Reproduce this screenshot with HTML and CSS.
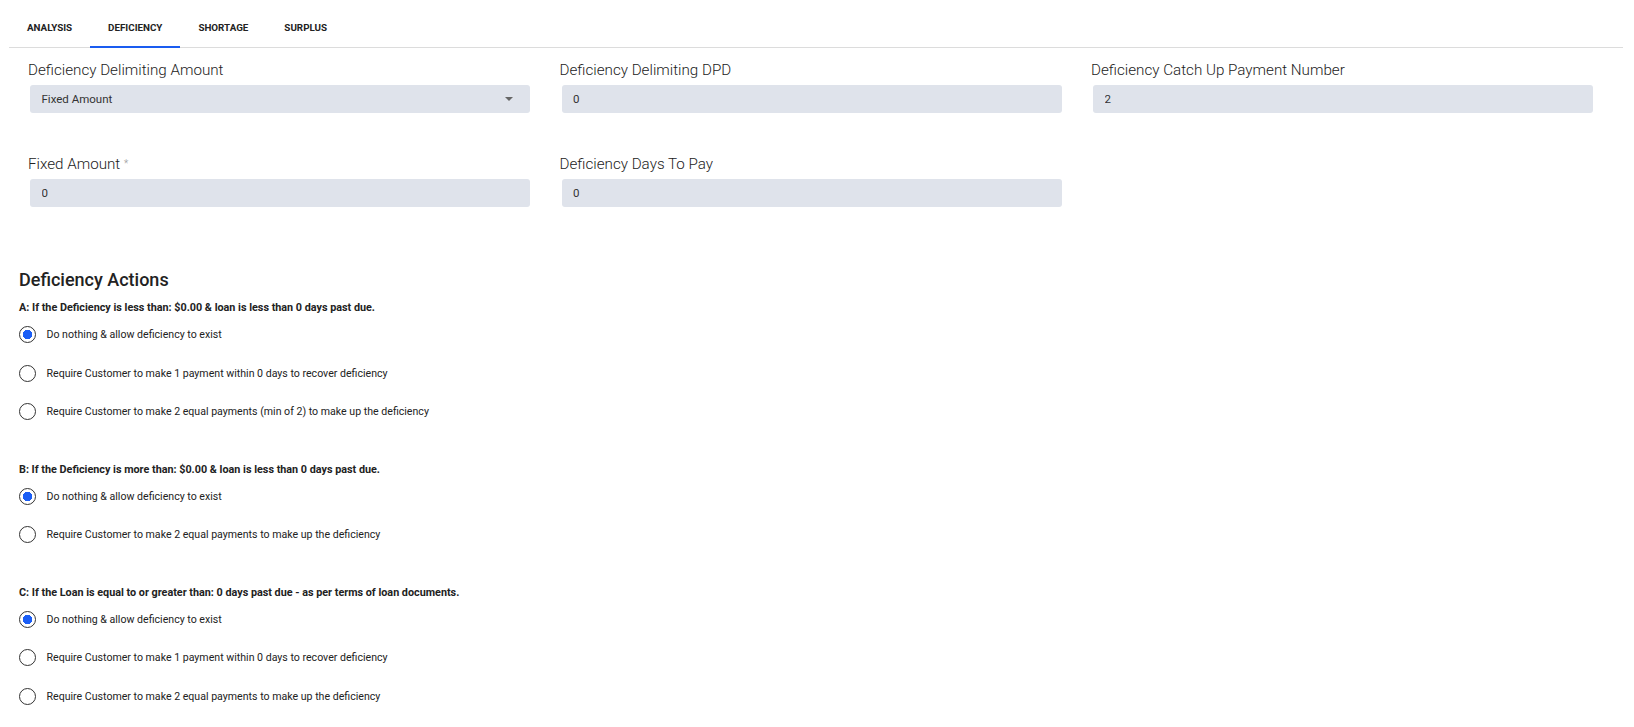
FILE: index.html
```html
<!DOCTYPE html>
<html lang="en">
<head>
    <meta charset="UTF-8">
    <title>Deficiency</title>
    <link rel="stylesheet" href="styles.css">
</head>
<body>
    <!-- Tabs -->
    <div class="tabs">
        <a class="tab">Analysis</a>
        <a class="tab active">Deficiency</a>
        <a class="tab">Shortage</a>
        <a class="tab">Surplus</a>
    </div>

    <!-- Settings fields -->
    <div class="fields">
        <div class="field">
            <label class="field-label">Deficiency Delimiting Amount</label>
            <div class="field-input select">
                <span>Fixed Amount</span>
                <svg class="caret" width="8" height="4" viewBox="0 0 8 4"><path d="M0 0 L8 0 L4 4 Z" fill="#666"/></svg>
            </div>
        </div>
        <div class="field">
            <label class="field-label">Deficiency Delimiting DPD</label>
            <input class="field-input" type="text" value="0">
        </div>
        <div class="field">
            <label class="field-label">Deficiency Catch Up Payment Number</label>
            <input class="field-input" type="text" value="2">
        </div>
        <div class="field">
            <label class="field-label">Fixed Amount <span class="req">*</span></label>
            <input class="field-input" type="text" value="0">
        </div>
        <div class="field">
            <label class="field-label">Deficiency Days To Pay</label>
            <input class="field-input" type="text" value="0">
        </div>
    </div>

    <!-- Actions -->
    <div class="actions">
        <h2>Deficiency Actions</h2>

        <div class="action-group">
            <p class="action-title">A: If the Deficiency is less than: $0.00 &amp; loan is less than 0 days past due.</p>
            <label class="option"><input type="radio" name="a" checked> Do nothing &amp; allow deficiency to exist</label>
            <label class="option"><input type="radio" name="a"> Require Customer to make 1 payment within 0 days to recover deficiency</label>
            <label class="option"><input type="radio" name="a"> Require Customer to make 2 equal payments (min of 2) to make up the deficiency</label>
        </div>

        <div class="action-group">
            <p class="action-title">B: If the Deficiency is more than: $0.00 &amp; loan is less than 0 days past due.</p>
            <label class="option"><input type="radio" name="b" checked> Do nothing &amp; allow deficiency to exist</label>
            <label class="option"><input type="radio" name="b"> Require Customer to make 2 equal payments to make up the deficiency</label>
        </div>

        <div class="action-group">
            <p class="action-title">C: If the Loan is equal to or greater than: 0 days past due - as per terms of loan documents.</p>
            <label class="option"><input type="radio" name="c" checked> Do nothing &amp; allow deficiency to exist</label>
            <label class="option"><input type="radio" name="c"> Require Customer to make 1 payment within 0 days to recover deficiency</label>
            <label class="option"><input type="radio" name="c"> Require Customer to make 2 equal payments to make up the deficiency</label>
        </div>
    </div>
</body>
</html>
```

FILE: styles.css
```css
/* Styles */
body {
    font-family: Roboto, "Liberation Sans", sans-serif;
    color: #222;
    background-color: #fff;
    margin: 0;
    padding: 0;
}

.tabs {
    display: flex;
    margin: 0 11px 0 9px;
    border-bottom: 1px solid #dcdcdc;
}

.tab {
    padding: 21px 18px 11px;
    font-size: 9.8px;
    line-height: 14px;
    font-weight: 700;
    text-transform: uppercase;
    color: #222;
    border-bottom: 2px solid transparent;
    margin-bottom: -1px;
}

.tab.active {
    border-bottom-color: #1a5cf0;
}

.fields {
    display: grid;
    grid-template-columns: repeat(3, 500.5px);
    column-gap: 31px;
    row-gap: 43px;
    padding: 14px 0 0 28px;
}

.field-label {
    display: block;
    font-size: 15.2px;
    line-height: 16px;
    font-weight: 300;
    color: #222;
    margin-bottom: 7px;
}

.req {
    color: #999;
    font-size: 10px;
    vertical-align: top;
}

.field-input {
    box-sizing: border-box;
    display: flex;
    align-items: center;
    justify-content: space-between;
    width: 500px;
    height: 28px;
    margin-left: 2px;
    padding: 0 11.5px;
    border: none;
    border-radius: 3px;
    background-color: #dfe3eb;
    font-family: inherit;
    font-size: 11.5px;
    color: #333;
    outline: none;
}

.caret {
    margin-right: 6px;
}

.actions {
    padding: 0 19px;
    margin-top: 63px;
}

.actions h2 {
    font-size: 18px;
    line-height: 20px;
    font-weight: 500;
    margin: 0 0 11px;
}

.action-group {
    display: flex;
    flex-direction: column;
    gap: 18.5px;
    margin-bottom: 41px;
}

.action-title {
    font-size: 10.8px;
    line-height: 14px;
    font-weight: 700;
    margin: 0 0 -9px;
}

.option {
    display: flex;
    align-items: center;
    height: 20px;
    font-size: 10.6px;
    color: #222;
}

.option input {
    appearance: none;
    -webkit-appearance: none;
    box-sizing: border-box;
    width: 17px;
    height: 17px;
    margin: 0 10.5px 0 0;
    border: 1.5px solid #333;
    border-radius: 50%;
    background: #fff;
}

.option input:checked {
    background: radial-gradient(circle, #1b5ef5 0 4.5px, #fff 5px);
}
```
